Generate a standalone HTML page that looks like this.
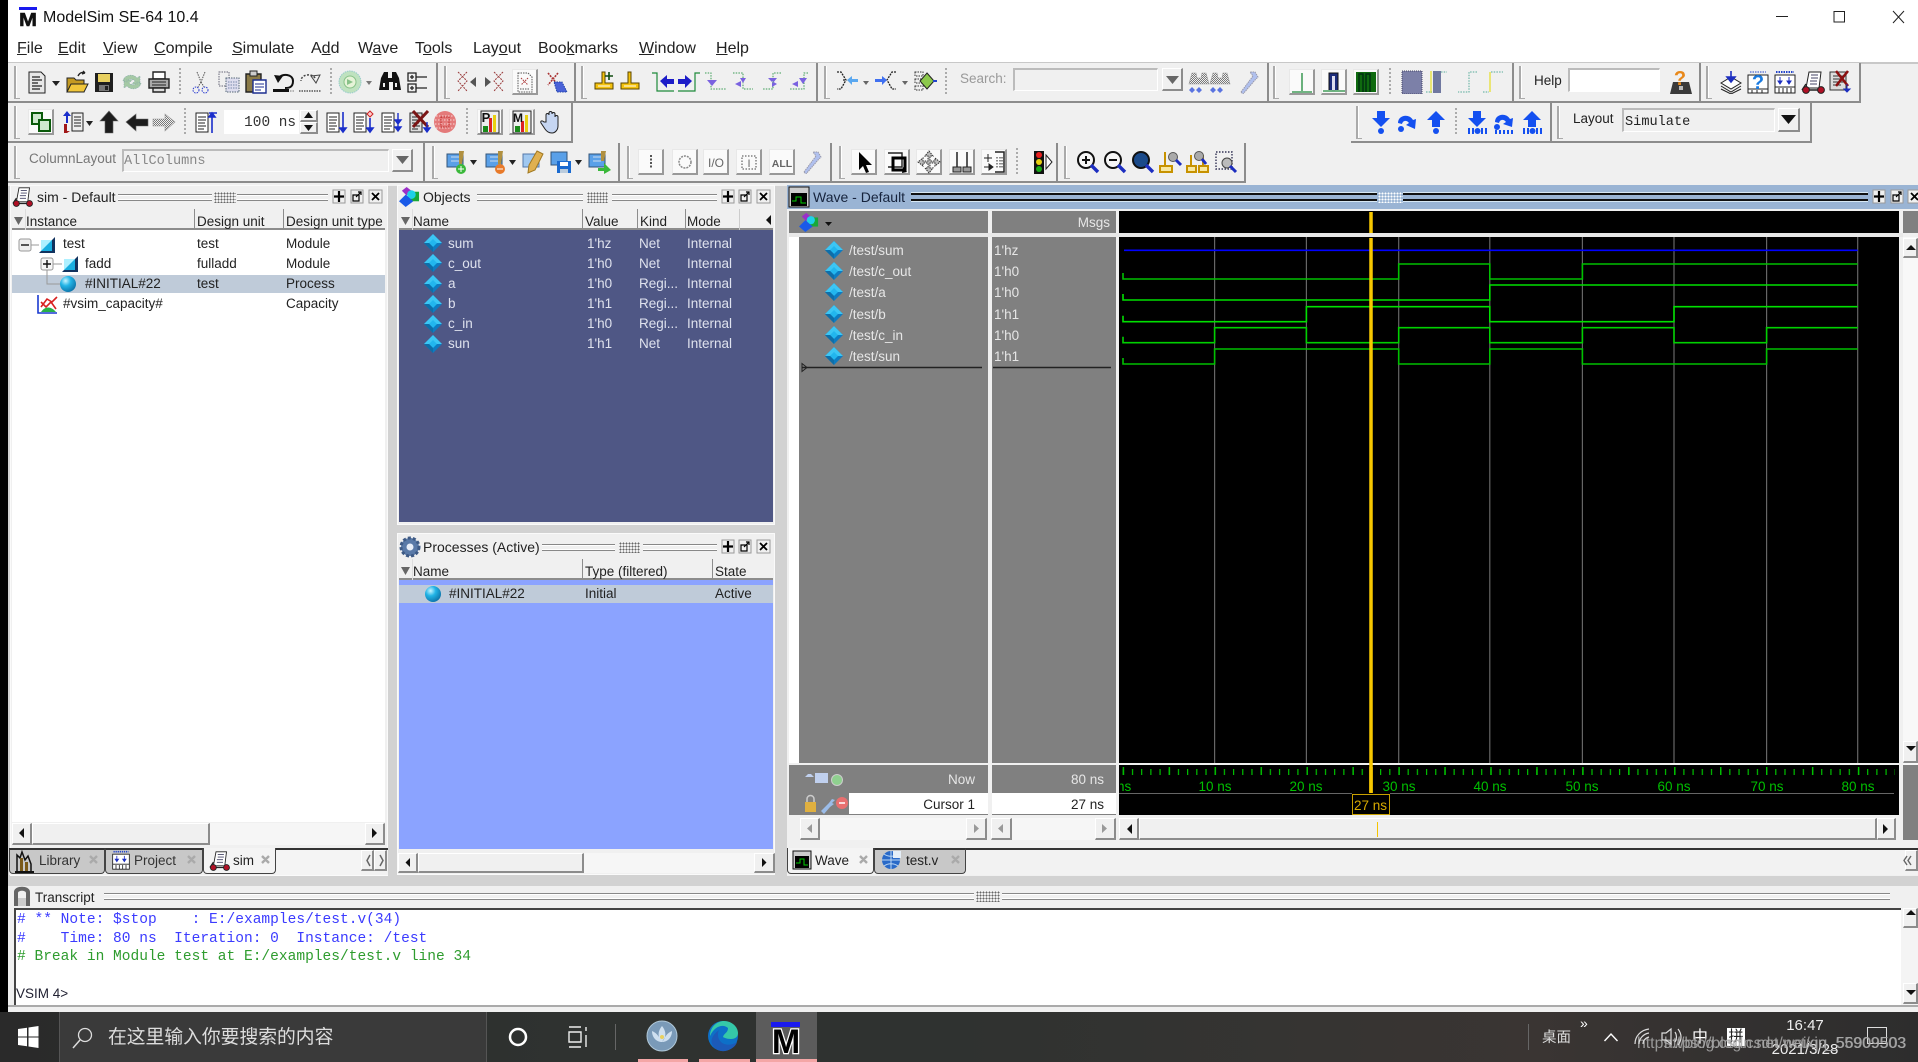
<!DOCTYPE html>
<html><head><meta charset="utf-8"><title>ModelSim SE-64 10.4</title>
<style>
html,body{margin:0;padding:0;width:1918px;height:1062px;overflow:hidden;background:#d2d2d2}
body{position:relative;font-family:"Liberation Sans","Noto Sans CJK SC",sans-serif;color:#222;font-size:13.5px;filter:blur(.35px)}
div{position:absolute;box-sizing:border-box;white-space:nowrap}
.t{line-height:18px;height:18px;margin-top:1px}
.mn{font-size:16px}
.m{font-family:"Liberation Mono",monospace}
u{text-decoration-thickness:1px}
.tb{background:#f0f0f0;border-right:2px solid #8c8c8c;border-bottom:2px solid #8c8c8c}
.g{width:2px;background:#aaa;border-right:1px solid #fff;box-sizing:content-box}
.g::after{content:"";position:absolute;left:0;bottom:0;width:6px;height:1px;background:#aaa}
.p{width:26px;height:26px;background:#fafafa;border:1px solid #e8e8e8;border-right:2px solid #999;border-bottom:2px solid #999}
.in{border:1px solid #bbb;border-right-color:#fff;border-bottom-color:#fff;border-top-width:2px;border-left-width:2px}
.b{background:#f0f0f0;border:1px solid #fff;border-right:2px solid #8c8c8c;border-bottom:2px solid #8c8c8c}
.pn{background:#f0f0f0;border:1px solid #fafafa}
.dl{height:7px;border-top:1px solid #888;border-bottom:1px solid #888;box-shadow:inset 0 1px 0 #fff,inset 0 -1px 0 #fff}
.dw{height:8px;border-top:2px solid #111;border-bottom:2px solid #111;box-shadow:0 -1px 0 #d8e8f4,0 1px 0 #d8e8f4}
.gr{height:11px;background-image:radial-gradient(#666 .8px,transparent 1px);background-size:3px 3px}
.hd{background:#f0f0f0;height:21px;border-bottom:2px solid #8c8c8c}
.cb{width:1px;background:#8c8c8c;height:21px}
.w{color:#e6e6e6}
.o{color:#dfe2ee}
.l{color:#00c000;width:60px;text-align:center;top:777px}
.tx{font-family:"Liberation Mono",monospace;font-size:14.55px;line-height:18px;height:18px;white-space:pre;left:17px}
</style></head><body>

<!-- window base -->
<div style="left:0;top:0;width:8px;height:1012px;background:#000"></div>
<div style="left:8px;top:0;width:1910px;height:62px;background:#fff"></div>
<div style="left:8px;top:62px;width:1910px;height:124px;background:#f0f0f0;border-top:2px solid #c8c8c8"></div>

<!-- title -->
<div class="t" style="left:43px;top:8px;font-size:16px;color:#111">ModelSim SE-64 10.4</div>
<div style="left:19px;top:7px;width:18px;height:3px;background:#1a1aee"></div>
<div style="left:17px;top:9px;width:22px;height:19px;text-align:center;font-weight:bold;font-size:18px;line-height:22px;color:#111;overflow:hidden;transform:scaleX(1.2);-webkit-text-stroke:.5px #111">M</div>

<!-- menu -->
<div class="t mn" style="left:17px;top:39px"><u>F</u>ile</div>
<div class="t mn" style="left:58px;top:39px"><u>E</u>dit</div>
<div class="t mn" style="left:103px;top:39px"><u>V</u>iew</div>
<div class="t mn" style="left:154px;top:39px"><u>C</u>ompile</div>
<div class="t mn" style="left:232px;top:39px"><u>S</u>imulate</div>
<div class="t mn" style="left:311px;top:39px">A<u>d</u>d</div>
<div class="t mn" style="left:358px;top:39px">W<u>a</u>ve</div>
<div class="t mn" style="left:415px;top:39px">T<u>o</u>ols</div>
<div class="t mn" style="left:473px;top:39px">Lay<u>o</u>ut</div>
<div class="t mn" style="left:538px;top:39px">Boo<u>k</u>marks</div>
<div class="t mn" style="left:639px;top:39px"><u>W</u>indow</div>
<div class="t mn" style="left:716px;top:39px"><u>H</u>elp</div>

<!-- toolbars row 1 -->
<div class="tb" style="left:8px;top:63px;width:430px;height:40px"></div>
<div class="tb" style="left:438px;top:63px;width:138px;height:40px"></div>
<div class="tb" style="left:576px;top:63px;width:242px;height:40px"></div>
<div class="tb" style="left:818px;top:63px;width:451px;height:40px"></div>
<div class="tb" style="left:1269px;top:63px;width:245px;height:40px"></div>
<div class="tb" style="left:1514px;top:63px;width:187px;height:40px"></div>
<div class="tb" style="left:1701px;top:63px;width:160px;height:40px"></div>
<!-- row 2 -->
<div class="tb" style="left:8px;top:103px;width:565px;height:40px"></div>
<div class="tb" style="left:1351px;top:103px;width:201px;height:40px"></div>
<div class="tb" style="left:1552px;top:103px;width:260px;height:40px"></div>
<!-- row 3 -->
<div class="tb" style="left:8px;top:143px;width:417px;height:40px"></div>
<div class="tb" style="left:425px;top:143px;width:195px;height:40px"></div>
<div class="tb" style="left:620px;top:143px;width:212px;height:40px"></div>
<div class="tb" style="left:832px;top:143px;width:226px;height:40px"></div>
<div class="tb" style="left:1058px;top:143px;width:188px;height:40px"></div>

<!-- grips -->
<div class="g" style="left:14px;top:66px;height:33px"></div>
<div class="g" style="left:444px;top:66px;height:33px"></div>
<div class="g" style="left:581px;top:66px;height:33px"></div>
<div class="g" style="left:824px;top:66px;height:33px"></div>
<div class="g" style="left:1273px;top:66px;height:33px"></div>
<div class="g" style="left:1519px;top:66px;height:33px"></div>
<div class="g" style="left:1706px;top:66px;height:33px"></div>
<div class="g" style="left:14px;top:106px;height:33px"></div>
<div class="g" style="left:1356px;top:106px;height:33px"></div>
<div class="g" style="left:1557px;top:106px;height:33px"></div>
<div class="g" style="left:14px;top:146px;height:33px"></div>
<div class="g" style="left:432px;top:146px;height:33px"></div>
<div class="g" style="left:627px;top:146px;height:33px"></div>
<div class="g" style="left:839px;top:146px;height:33px"></div>
<div class="g" style="left:1064px;top:146px;height:33px"></div>

<!-- pressed buttons -->
<div class="p" style="left:512px;top:69px"></div>
<div class="p" style="left:1289px;top:69px"></div>
<div class="p" style="left:1321px;top:69px"></div>
<div class="p" style="left:1353px;top:69px"></div>
<div class="p" style="left:28px;top:109px"></div>
<div class="p" style="left:477px;top:109px"></div>
<div class="p" style="left:509px;top:109px"></div>
<div class="p" style="left:638px;top:149px"></div>
<div class="p" style="left:672px;top:149px"></div>
<div class="p" style="left:703px;top:149px"></div>
<div class="p" style="left:736px;top:149px"></div>
<div class="p" style="left:769px;top:149px"></div>
<div class="p" style="left:851px;top:149px"></div>
<div class="p" style="left:884px;top:149px"></div>
<div class="p" style="left:916px;top:149px"></div>
<div class="p" style="left:949px;top:149px"></div>
<div class="p" style="left:981px;top:149px"></div>

<!-- toolbar fields -->
<div class="t" style="left:960px;top:69px;color:#999">Search:</div>
<div class="in" style="left:1013px;top:68px;width:145px;height:23px;background:#f0f0f0"></div>
<div class="b" style="left:1162px;top:68px;width:21px;height:23px"></div>
<div class="t" style="left:1534px;top:71px">Help</div>
<div class="in" style="left:1568px;top:68px;width:92px;height:24px;background:#fff"></div>
<div class="in" style="left:224px;top:110px;width:75px;height:24px;background:#fff;border-color:#fff"></div>
<div class="t m" style="left:224px;top:113px;width:72px;text-align:right;font-size:14.4px;color:#333">100 ns</div>
<div class="b" style="left:300px;top:110px;width:18px;height:12px;padding:0"></div>
<div class="b" style="left:300px;top:122px;width:18px;height:12px;padding:0"></div>
<div class="t" style="left:1573px;top:109px">Layout</div>
<div class="in" style="left:1622px;top:108px;width:153px;height:24px;background:#f0f0f0"></div>
<div class="t m" style="left:1625px;top:113px;font-size:13.6px">Simulate</div>
<div class="b" style="left:1778px;top:108px;width:22px;height:24px"></div>
<div class="t" style="left:29px;top:149px;color:#777">ColumnLayout</div>
<div class="in" style="left:122px;top:149px;width:267px;height:23px;background:#f0f0f0"></div>
<div class="t m" style="left:124px;top:152px;font-size:13.6px;color:#888">AllColumns</div>
<div class="b" style="left:392px;top:149px;width:21px;height:23px"></div>

<!-- SIM PANEL -->
<div class="pn" style="left:10px;top:185px;width:378px;height:691px"></div>
<div class="t" style="left:37px;top:187px;font-size:14px">sim - Default</div>
<div class="dl" style="left:118px;top:194px;width:94px"></div>
<div class="gr" style="left:214px;top:192px;width:22px"></div>
<div class="dl" style="left:237px;top:194px;width:91px"></div>
<div class="hd" style="left:12px;top:209px;width:373px"></div>
<div class="cb" style="left:25px;top:209px;background:#ddd"></div>
<div class="cb" style="left:194px;top:209px"></div>
<div class="cb" style="left:283px;top:209px"></div>
<div class="t" style="left:26px;top:212px">Instance</div>
<div class="t" style="left:197px;top:212px">Design unit</div>
<div class="t" style="left:286px;top:212px">Design unit type</div>
<div style="left:12px;top:230px;width:373px;height:592px;background:#fff"></div>
<div style="left:12px;top:275px;width:373px;height:18px;background:#bfcbd9"></div>
<div class="t" style="left:63px;top:234px">test</div>
<div class="t" style="left:197px;top:234px">test</div>
<div class="t" style="left:286px;top:234px">Module</div>
<div class="t" style="left:85px;top:254px">fadd</div>
<div class="t" style="left:197px;top:254px">fulladd</div>
<div class="t" style="left:286px;top:254px">Module</div>
<div class="t" style="left:85px;top:274px">#INITIAL#22</div>
<div class="t" style="left:197px;top:274px">test</div>
<div class="t" style="left:286px;top:274px">Process</div>
<div class="t" style="left:63px;top:294px">#vsim_capacity#</div>
<div class="t" style="left:286px;top:294px">Capacity</div>
<div style="left:12px;top:823px;width:373px;height:22px;background:#f6f6f6"></div>
<div class="b" style="left:12px;top:823px;width:20px;height:22px"></div>
<div class="b" style="left:32px;top:823px;width:178px;height:22px"></div>
<div class="b" style="left:365px;top:823px;width:20px;height:22px"></div>
<!-- sim tabs -->
<div style="left:9px;top:848px;width:379px;height:27px;background:#f2f2f2;border-top:2px solid #333"></div>
<div style="left:9px;top:848px;width:96px;height:26px;background:#c8c8c8;border:1px solid #444;border-top:2px solid #333;border-radius:0 0 4px 4px"></div>
<div style="left:105px;top:848px;width:98px;height:26px;background:#c8c8c8;border:1px solid #444;border-top:2px solid #333;border-radius:0 0 4px 4px"></div>
<div style="left:203px;top:848px;width:73px;height:26px;background:#f4f4f4;border:1px solid #444;border-top:0;border-radius:0 0 4px 4px"></div>
<div style="left:276px;top:848px;width:85px;height:27px;background:#f4f4f4;border-top:2px solid #333"></div>
<div class="t" style="left:39px;top:851px;color:#333">Library</div>
<div class="t" style="left:134px;top:851px;color:#333">Project</div>
<div class="t" style="left:233px;top:851px;color:#222">sim</div>
<div class="b" style="left:361px;top:850px;width:13px;height:21px"></div>
<div class="b" style="left:374px;top:850px;width:13px;height:21px"></div>

<!-- OBJECTS PANEL -->
<div class="pn" style="left:397px;top:185px;width:378px;height:340px"></div>
<div class="t" style="left:423px;top:187px;font-size:14px">Objects</div>
<div class="dl" style="left:477px;top:194px;width:106px"></div>
<div class="gr" style="left:587px;top:192px;width:21px"></div>
<div class="dl" style="left:612px;top:194px;width:105px"></div>
<div class="hd" style="left:399px;top:209px;width:374px"></div>
<div class="cb" style="left:412px;top:209px;background:#ddd"></div>
<div class="cb" style="left:582px;top:209px"></div>
<div class="cb" style="left:637px;top:209px"></div>
<div class="cb" style="left:685px;top:209px"></div>
<div class="cb" style="left:739px;top:209px;background:#ccc"></div>
<div class="t" style="left:413px;top:212px">Name</div>
<div class="t" style="left:585px;top:212px">Value</div>
<div class="t" style="left:640px;top:212px">Kind</div>
<div class="t" style="left:687px;top:212px">Mode</div>
<div style="left:399px;top:230px;width:374px;height:292px;background:#4f5785"></div>
<div class="t o" style="left:448px;top:234px">sum</div><div class="t o" style="left:587px;top:234px">1'hz</div><div class="t o" style="left:639px;top:234px">Net</div><div class="t o" style="left:687px;top:234px">Internal</div>
<div class="t o" style="left:448px;top:254px">c_out</div><div class="t o" style="left:587px;top:254px">1'h0</div><div class="t o" style="left:639px;top:254px">Net</div><div class="t o" style="left:687px;top:254px">Internal</div>
<div class="t o" style="left:448px;top:274px">a</div><div class="t o" style="left:587px;top:274px">1'h0</div><div class="t o" style="left:639px;top:274px">Regi...</div><div class="t o" style="left:687px;top:274px">Internal</div>
<div class="t o" style="left:448px;top:294px">b</div><div class="t o" style="left:587px;top:294px">1'h1</div><div class="t o" style="left:639px;top:294px">Regi...</div><div class="t o" style="left:687px;top:294px">Internal</div>
<div class="t o" style="left:448px;top:314px">c_in</div><div class="t o" style="left:587px;top:314px">1'h0</div><div class="t o" style="left:639px;top:314px">Regi...</div><div class="t o" style="left:687px;top:314px">Internal</div>
<div class="t o" style="left:448px;top:334px">sun</div><div class="t o" style="left:587px;top:334px">1'h1</div><div class="t o" style="left:639px;top:334px">Net</div><div class="t o" style="left:687px;top:334px">Internal</div>

<!-- PROCESSES PANEL -->
<div class="pn" style="left:397px;top:533px;width:378px;height:342px"></div>
<div class="t" style="left:423px;top:537px;font-size:14px">Processes (Active)</div>
<div class="dl" style="left:542px;top:544px;width:73px"></div>
<div class="gr" style="left:619px;top:542px;width:21px"></div>
<div class="dl" style="left:643px;top:544px;width:74px"></div>
<div class="hd" style="left:399px;top:559px;width:374px"></div>
<div class="cb" style="left:412px;top:559px;background:#ddd"></div>
<div class="cb" style="left:582px;top:559px"></div>
<div class="cb" style="left:712px;top:559px"></div>
<div class="t" style="left:413px;top:562px">Name</div>
<div class="t" style="left:585px;top:562px">Type (filtered)</div>
<div class="t" style="left:715px;top:562px">State</div>
<div style="left:399px;top:580px;width:374px;height:269px;background:#8ba3ff"></div>
<div style="left:399px;top:585px;width:374px;height:18px;background:#bfcbd9"></div>
<div class="t" style="left:449px;top:584px">#INITIAL#22</div>
<div class="t" style="left:585px;top:584px">Initial</div>
<div class="t" style="left:715px;top:584px">Active</div>
<div style="left:398px;top:853px;width:377px;height:20px;background:#f6f6f6"></div>
<div class="b" style="left:398px;top:853px;width:20px;height:20px"></div>
<div class="b" style="left:418px;top:853px;width:166px;height:20px"></div>
<div class="b" style="left:754px;top:853px;width:21px;height:20px"></div>

<!-- WAVE PANEL -->
<div style="left:787px;top:185px;width:1131px;height:691px;background:#f0f0f0"></div>
<div style="left:787px;top:185px;width:1131px;height:24px;background:#9ab4d4"></div>
<div class="t" style="left:813px;top:187px;font-size:14px;color:#16233c">Wave - Default</div>
<div class="dw" style="left:911px;top:193px;width:466px"></div>
<div class="gr" style="left:1378px;top:192px;width:25px;background-image:radial-gradient(#fff .9px,transparent 1.1px)"></div>
<div class="dw" style="left:1403px;top:193px;width:465px"></div>
<!-- wave columns -->
<div style="left:789px;top:211px;width:199px;height:22px;background:#808080"></div>
<div style="left:992px;top:211px;width:124px;height:22px;background:#808080"></div>
<div style="left:1119px;top:211px;width:780px;height:22px;background:#000"></div>
<div style="left:789px;top:233px;width:1114px;height:4px;background:#e8e8e8"></div>
<div style="left:789px;top:237px;width:199px;height:526px;background:#808080"></div>
<div style="left:789px;top:237px;width:10px;height:526px;background:#fff"></div>
<div style="left:992px;top:237px;width:124px;height:526px;background:#808080"></div>
<div style="left:1119px;top:237px;width:780px;height:526px;background:#000"></div>
<div class="t w" style="left:1070px;top:213px;width:40px;text-align:right">Msgs</div>
<div class="t w" style="left:849px;top:241px">/test/sum</div><div class="t w" style="left:994px;top:241px">1'hz</div>
<div class="t w" style="left:849px;top:262px">/test/c_out</div><div class="t w" style="left:994px;top:262px">1'h0</div>
<div class="t w" style="left:849px;top:283px">/test/a</div><div class="t w" style="left:994px;top:283px">1'h0</div>
<div class="t w" style="left:849px;top:305px">/test/b</div><div class="t w" style="left:994px;top:305px">1'h1</div>
<div class="t w" style="left:849px;top:326px">/test/c_in</div><div class="t w" style="left:994px;top:326px">1'h0</div>
<div class="t w" style="left:849px;top:347px">/test/sun</div><div class="t w" style="left:994px;top:347px">1'h1</div>
<!-- bottom of wave -->
<div style="left:789px;top:765px;width:199px;height:50px;background:#808080"></div>
<div style="left:992px;top:765px;width:124px;height:50px;background:#808080"></div>
<div style="left:1119px;top:765px;width:780px;height:50px;background:#000"></div>
<div style="left:849px;top:793px;width:139px;height:21px;background:#fff"></div>
<div style="left:992px;top:793px;width:124px;height:21px;background:#fff"></div>
<div class="t w" style="left:900px;top:770px;width:75px;text-align:right">Now</div>
<div class="t" style="left:900px;top:795px;width:75px;text-align:right">Cursor 1</div>
<div class="t w" style="left:1040px;top:770px;width:64px;text-align:right">80 ns</div>
<div class="t" style="left:1040px;top:795px;width:64px;text-align:right">27 ns</div>
<div class="t" style="left:1120px;top:777px;width:16px;overflow:hidden;color:#00c000"><span style="margin-left:-3px">ns</span></div>
<div class="t l" style="left:1185px">10 ns</div>
<div class="t l" style="left:1276px">20 ns</div>
<div class="t l" style="left:1369px">30 ns</div>
<div class="t l" style="left:1460px">40 ns</div>
<div class="t l" style="left:1552px">50 ns</div>
<div class="t l" style="left:1644px">60 ns</div>
<div class="t l" style="left:1737px">70 ns</div>
<div class="t l" style="left:1828px">80 ns</div>
<div style="left:1352px;top:794px;width:38px;height:21px;border:1px solid #c8a000"></div>
<div class="t" style="left:1354px;top:796px;color:#d8aa00">27 ns</div>
<!-- wave scrolls -->
<div style="left:800px;top:818px;width:187px;height:22px;background:#f6f6f6"></div>
<div class="b" style="left:800px;top:818px;width:20px;height:22px"></div>
<div class="b" style="left:966px;top:818px;width:21px;height:22px"></div>
<div style="left:991px;top:818px;width:125px;height:22px;background:#f6f6f6"></div>
<div class="b" style="left:991px;top:818px;width:21px;height:22px"></div>
<div class="b" style="left:1095px;top:818px;width:21px;height:22px"></div>
<div class="b" style="left:1119px;top:818px;width:20px;height:22px"></div>
<div class="b" style="left:1139px;top:818px;width:738px;height:22px"></div>
<div class="b" style="left:1877px;top:818px;width:19px;height:22px"></div>
<!-- wave right scrollbar -->
<div style="left:1903px;top:211px;width:15px;height:22px;background:#808080"></div>
<div style="left:1903px;top:237px;width:15px;height:528px;background:#f8f8f8"></div>
<div class="b" style="left:1903px;top:238px;width:15px;height:20px"></div>
<div class="b" style="left:1903px;top:741px;width:15px;height:22px"></div>
<div style="left:1903px;top:765px;width:15px;height:75px;background:#808080"></div>
<!-- wave tabs -->
<div style="left:787px;top:848px;width:1131px;height:27px;background:#f2f2f2;border-top:2px solid #333"></div>
<div style="left:787px;top:848px;width:87px;height:26px;background:#f4f4f4;border:1px solid #444;border-top:0;border-radius:0 0 4px 4px"></div>
<div style="left:874px;top:848px;width:92px;height:26px;background:#c8c8c8;border:1px solid #444;border-top:2px solid #333;border-radius:0 0 4px 4px"></div>
<div class="t" style="left:815px;top:851px">Wave</div>
<div class="t" style="left:906px;top:851px">test.v</div>
<div class="b" style="left:1905px;top:850px;width:13px;height:21px"></div>

<!-- TRANSCRIPT -->
<div style="left:8px;top:886px;width:1910px;height:126px;background:#f0f0f0"></div>
<div class="t" style="left:35px;top:888px">Transcript</div>
<div class="dl" style="left:104px;top:893px;width:870px"></div>
<div class="gr" style="left:976px;top:891px;width:24px"></div>
<div class="dl" style="left:1002px;top:893px;width:888px"></div>
<div style="left:14px;top:908px;width:1887px;height:97px;background:#fff;border-top:2px solid #444;border-left:2px solid #444"></div>
<div class="tx" style="top:911px;color:#3b3bff"># ** Note: $stop    : E:/examples/test.v(34)</div>
<div class="tx" style="top:930px;color:#3b3bff">#    Time: 80 ns  Iteration: 0  Instance: /test</div>
<div class="tx" style="top:948px;color:#2e9c2e"># Break in Module test at E:/examples/test.v line 34</div>
<div class="t" style="left:16px;top:984px;color:#223;font-size:13.5px">VSIM 4&gt;</div>
<div style="left:1901px;top:908px;width:17px;height:97px;background:#f4f4f4"></div>
<div class="b" style="left:1903px;top:908px;width:15px;height:20px"></div>
<div class="b" style="left:1903px;top:983px;width:15px;height:21px"></div>
<div style="left:8px;top:1005px;width:1910px;height:2px;background:#aaa"></div>

<!-- TASKBAR -->
<div style="left:0;top:1012px;width:1918px;height:50px;background:linear-gradient(90deg,#2a2a2a 0,#2f3230 30%,#2f3230 50%,#3a3533 80%,#2d2d2d 100%)"></div>
<div style="left:59px;top:1012px;width:428px;height:50px;background:#3a3a3a;border:1px solid #555;border-top:0;border-bottom:0"></div>
<div style="left:615px;top:1024px;width:1px;height:26px;background:#666"></div>
<div style="left:756px;top:1012px;width:61px;height:50px;background:#5c5c5c"></div>
<div style="left:638px;top:1059px;width:50px;height:3px;background:#f4a6a6"></div>
<div style="left:699px;top:1059px;width:51px;height:3px;background:#f4a6a6"></div>
<div style="left:756px;top:1059px;width:61px;height:3px;background:#f4a6a6"></div>
<div style="left:108px;top:1024px;height:26px;line-height:26px;font-size:18.8px;color:#ddd;font-family:'Liberation Sans','Noto Sans CJK SC',sans-serif">在这里输入你要搜索的内容</div>
<div style="left:771px;top:1022px;width:29px;height:5px;background:#1a1aee"></div>
<div style="left:767px;top:1020px;width:38px;height:39px;text-align:center;font-weight:bold;font-size:34px;line-height:45px;color:#000;-webkit-text-stroke:2.5px #fff;paint-order:stroke fill;overflow:hidden">M</div>

<div style="left:1528px;top:1024px;width:1px;height:26px;background:#666"></div>
<div class="t" style="left:1542px;top:1028px;font-size:14.5px;color:#ddd">桌面</div>
<div class="t" style="left:1580px;top:1013px;font-size:14px;color:#fff">»</div>
<div class="t" style="left:1692px;top:1028px;font-size:16px;color:#fff">中</div>
<div style="left:1727px;top:1028px;width:18px;height:18px;background:#fff;color:#222;font-size:15px;line-height:18px;text-align:center">拼</div>
<div class="t" style="left:1765px;top:1016px;width:80px;text-align:center;font-size:15px;color:#eee">16:47</div>
<div class="t" style="left:1765px;top:1040px;width:80px;text-align:center;font-size:15px;color:#eee">2021/3/28</div>
<div style="left:1867px;top:1027px;width:20px;height:17px;border:1px solid #ddd"></div>
<div class="t" style="left:1637px;top:1034px;font-size:15.8px;color:#aaa;opacity:.85">https://blog.csdn.net/weixin_55909503</div>
<div class="t" style="left:1664px;top:1034px;font-size:15.8px;color:#aaa;opacity:.85">https://blog.csdn.net/qq_56909503</div>

<!-- ICON & WAVE OVERLAY -->
<svg style="position:absolute;left:0;top:0;z-index:5;pointer-events:none" width="1918" height="1062" viewBox="0 0 1918 1062">
<defs>
<radialGradient id="ball" cx=".35" cy=".3" r=".8"><stop offset="0" stop-color="#c8f4ff"/><stop offset=".4" stop-color="#22b4e6"/><stop offset="1" stop-color="#0a6aa0"/></radialGradient>
<pattern id="tk1" x="1122.7" y="769" width="9.19" height="6" patternUnits="userSpaceOnUse"><rect width="1.2" height="6" fill="#00c000"/></pattern>
<pattern id="tk5" x="1122.7" y="767" width="45.95" height="8" patternUnits="userSpaceOnUse"><rect width="1.4" height="8" fill="#00c000"/></pattern>
<pattern id="dith" width="2" height="2" patternUnits="userSpaceOnUse"><rect width="1" height="1" fill="#777"/><rect x="1" y="1" width="1" height="1" fill="#777"/></pattern>

<symbol id="doc" viewBox="0 0 24 24"><path d="M4 2h12l4 4v17H4z" fill="#e8e8e8" stroke="#222"/><path d="M7 7h8M7 10h10M7 13h6M7 16h10M7 19h8" stroke="#222" stroke-width="1.2"/></symbol>
<symbol id="folder" viewBox="0 0 24 24"><path d="M2 8h7l2 2h8v12H2z" fill="#c49a22" stroke="#222"/><path d="M2 22l4-8h17l-4 8z" fill="#f0c63a" stroke="#222"/><path d="M13 6c2-4 5-4 7-3m0 0l-2-2m2 2l-3 1" fill="none" stroke="#222" stroke-width="1.4"/></symbol>
<symbol id="save" viewBox="0 0 24 24"><path d="M3 3h18v19H3z" fill="#1f1f1f"/><path d="M6 4h12v8H6z" fill="#e8d060"/><path d="M7 15h10v6H7z" fill="#777"/><path d="M13 16h3v4h-3z" fill="#222"/></symbol>
<symbol id="reload" viewBox="0 0 24 24"><path d="M3 11c1-6 10-8 14-3l3-2v8h-8l3-3c-3-3-7-2-8 1zM21 13c-1 6-10 8-14 3l-3 2v-8h8l-3 3c3 3 7 2 8-1z" fill="#a5c9a5" stroke="#8aa" stroke-width=".6" stroke-dasharray="1.4 1"/></symbol>
<symbol id="print" viewBox="0 0 24 24"><path d="M6 2h12v7H6z" fill="#fff" stroke="#222" stroke-width="1.4"/><path d="M2 9h20v9H2z" fill="#aaa" stroke="#222" stroke-width="1.4"/><path d="M5 12h14M5 15h14" stroke="#222"/><path d="M6 18h12v4H6z" fill="#ddd" stroke="#222" stroke-width="1.4"/></symbol>
<symbol id="cut" viewBox="0 0 24 24"><path d="M9 2l4 10 4-10M13 12l-3 5M13 12l3 5" fill="none" stroke="#555" stroke-dasharray="1.5 1"/><circle cx="8" cy="20" r="3" fill="none" stroke="#2a3bd0" stroke-dasharray="1.5 1"/><circle cx="17" cy="20" r="3" fill="none" stroke="#2a3bd0" stroke-dasharray="1.5 1"/></symbol>
<symbol id="copy" viewBox="0 0 24 24"><path d="M2 2h10v14H2z" fill="none" stroke="#667" stroke-dasharray="1.5 1"/><path d="M9 8h13v14H9z" fill="#dde" stroke="#567"  stroke-dasharray="1.5 1"/><path d="M11 12h9M11 15h9M11 18h9" stroke="#78a" stroke-dasharray="1.5 1"/></symbol>
<symbol id="paste" viewBox="0 0 24 24"><path d="M2 4h15v18H2z" fill="#8a7a48" stroke="#222" stroke-width="1.4"/><path d="M6 1h7v5H6z" fill="#ccc" stroke="#222"/><path d="M9 10h13v13H9z" fill="#fff" stroke="#1c2e90" stroke-width="1.4"/><path d="M11 14h9M11 17h9M11 20h6" stroke="#1c2e90"/></symbol>
<symbol id="undo" viewBox="0 0 24 24"><path d="M7 8c3-5 14-4 14 3s-5 7-8 7" fill="none" stroke="#111" stroke-width="2"/><path d="M2 5l9 1-5 7z" fill="#111"/><path d="M1 19h16v3H1z" fill="#111"/><path d="M18 21h5" stroke="#777" stroke-dasharray="1.5 1"/></symbol>
<symbol id="redo" viewBox="0 0 24 24"><path d="M17 8C14 3 3 4 3 11" fill="none" stroke="#444" stroke-width="1.5" stroke-dasharray="2 1.5"/><path d="M22 5l-9 1 5 7z" fill="none" stroke="#444"/><path d="M1 21h22" stroke="#555" stroke-dasharray="1.5 1" stroke-width="1.4"/></symbol>
<symbol id="green" viewBox="0 0 24 24"><circle cx="12" cy="12" r="11" fill="#bfe2bf" stroke="#9cc" stroke-dasharray="1.5 .8"/><circle cx="12" cy="12" r="6" fill="#e6f3d8" stroke="#88c288"/><path d="M9 9l6 3-6 3z" fill="#88c288"/></symbol>
<symbol id="bino" viewBox="0 0 24 24"><path d="M3 8l3-6h4v6h4V2h4l3 6 2 12h-8V12h-4v8H1z" fill="#111"/><path d="M5 13h2v4H5zM17 13h2v4h-2z" fill="#eee"/></symbol>
<symbol id="tree" viewBox="0 0 24 24"><path d="M3 3h8v8H3zM3 14h8v8H3z" fill="#eee" stroke="#222" stroke-width="1.3"/><path d="M11 7h11M11 18h11M5 7h4M7 5v4M5 18h4M7 16v4" stroke="#222" stroke-width="1.3"/></symbol>
<symbol id="xl" viewBox="0 0 24 24"><path d="M3 2l9 9-9 10M12 2l-9 9 9 10" fill="none" stroke="#9a3c3c" stroke-dasharray="2 1"/><path d="M21 7l-6 5 6 5z" fill="#555"/></symbol>
<symbol id="xr" viewBox="0 0 24 24"><path d="M12 2l9 9-9 10M21 2l-9 9 9 10" fill="none" stroke="#9a3c3c" stroke-dasharray="2 1"/><path d="M3 7l6 5-6 5z" fill="#555"/></symbol>
<symbol id="xdoc" viewBox="0 0 24 24"><path d="M5 3h10l4 4v15H5z" fill="none" stroke="#555" stroke-dasharray="1.5 1"/><path d="M8 8l7 7M15 8l-7 7" stroke="#a33" stroke-dasharray="1.5 1"/><path d="M7 19h10" stroke="#555" stroke-dasharray="1.5 1"/></symbol>
<symbol id="xblue" viewBox="0 0 24 24"><path d="M3 3l10 12M13 3L3 15" stroke="#a33" stroke-width="1.6" stroke-dasharray="2 1"/><path d="M9 12h8l5 10H12z" fill="#4a62d8" stroke="#24a" stroke-dasharray="1.5 1"/></symbol>
<symbol id="yp" viewBox="0 0 24 24"><path d="M9 2v11H2v6h18v-6h-8V2z" fill="#f4c20d" stroke="#5a4500"/><path d="M5 16h12" stroke="#fff"/><path d="M16 2v8M12 6h8" stroke="#0f4a0f" stroke-width="1.6"/></symbol>
<symbol id="yl" viewBox="0 0 24 24"><path d="M9 2v11H2v6h18v-6h-8V2z" fill="#f4c20d" stroke="#5a4500"/><path d="M5 16h12" stroke="#fff"/></symbol>
<symbol id="gl" viewBox="0 0 24 24"><path d="M0 3h5v18h17" fill="none" stroke="#1d8a3a" stroke-width="1.2"/><path d="M8 11l7-6v4h7v5h-7v4z" fill="#1c1cc8"/></symbol>
<symbol id="gr" viewBox="0 0 24 24"><path d="M24 3h-5v18H2" fill="none" stroke="#1d8a3a" stroke-width="1.2"/><path d="M16 11L9 5v4H2v5h7v4z" fill="#1c1cc8"/></symbol>
<symbol id="d1" viewBox="0 0 24 24"><path d="M1 3h6v16h15" fill="none" stroke="#3a9c55" stroke-dasharray="1.5 1.2"/><path d="M3 10h10l-5 6z" fill="#7a62e0"/></symbol>
<symbol id="d2" viewBox="0 0 24 24"><path d="M2 3h10v16h10" fill="none" stroke="#3a9c55" stroke-dasharray="1.5 1.2"/><path d="M4 14l6-3v6zM9 8h6l-3 5z" fill="#7a62e0"/></symbol>
<symbol id="d3" viewBox="0 0 24 24"><path d="M22 3H14v16H3" fill="none" stroke="#3a9c55" stroke-dasharray="1.5 1.2"/><path d="M9 8h9l-4 5zM18 14l-5-3v6z" fill="#7a62e0"/></symbol>
<symbol id="d4" viewBox="0 0 24 24"><path d="M22 3h-4v16H3" fill="none" stroke="#3a9c55" stroke-dasharray="1.5 1.2"/><path d="M6 14l6-3v6zM13 8h8l-4 6z" fill="#7a62e0"/></symbol>
<symbol id="mg1" viewBox="0 0 24 24"><path d="M2 2h4l5 8-5 9H2M8 10h3" fill="none" stroke="#222" stroke-dasharray="2 1" stroke-width="1.3"/><path d="M12 10l5-4v3h6v3h-6v3z" fill="#5aa8f0"/></symbol>
<symbol id="mg2" viewBox="0 0 24 24"><path d="M22 2h-4l-5 8 5 9h4" fill="none" stroke="#222" stroke-dasharray="2 1" stroke-width="1.3"/><path d="M13 10l-5-4v3H1v3h7v3z" fill="#4070f0"/></symbol>
<symbol id="mg3" viewBox="0 0 24 24"><path d="M2 2h8v4H2zM2 9h8v4H2zM2 16h8v4H2z" fill="none" stroke="#333" stroke-dasharray="1.5 1"/><path d="M14 3l7 8-7 8-7-8z" fill="#8cc84c" stroke="#222"/><path d="M20 11h4" stroke="#24c" stroke-width="2"/></symbol>
<symbol id="bgray" viewBox="0 0 24 24"><path d="M2 14L5 3h4l1 5h4l1-5h4l3 11z" fill="url(#dith)" stroke="#999" stroke-width=".6"/><path d="M2 20l3-3 3 3-3 3zM9 20l3-3 3 3-3 3z" fill="#5a74e0"/></symbol>
<symbol id="wrg" viewBox="0 0 24 24"><path d="M5 22L17 6l-3-4h5l3 5-3 3-12 14z" fill="#b0c0ee" stroke="#99a" stroke-dasharray="1.5 .8"/></symbol>
<symbol id="sg1" viewBox="0 0 24 24"><path d="M12 3v18M2 22h20" stroke="#1d8a3a" stroke-width="1.3"/></symbol>
<symbol id="sg2" viewBox="0 0 24 24"><path d="M7 20V3h9v17" fill="#1c2c7a" stroke="#111"/><path d="M10 6h3v15h-3z" fill="#dde"/><path d="M1 21h22" stroke="#1d8a3a" stroke-width="1.3"/></symbol>
<symbol id="sg3" viewBox="0 0 24 24"><path d="M2 2h20v20H2z" fill="#0f6a0f"/><path d="M5 22V4h4v18M12 22V4h4v18" fill="none" stroke="#031" stroke-width="1.5"/></symbol>
<symbol id="sg4" viewBox="0 0 24 24"><path d="M2 1h20v23H2z" fill="#7c80a8"/><path d="M2 1h20v23H2z" fill="none" stroke="#446" stroke-dasharray="1 1"/></symbol>
<symbol id="sg5" viewBox="0 0 24 24"><path d="M8 1h8v22H8z" fill="#7078a0"/><path d="M6 1v22" stroke="#e8e040" stroke-width="1.4"/><path d="M16 2h6M1 22h6" stroke="#5a9" stroke-dasharray="1.5 1.2"/></symbol>
<symbol id="sg6" viewBox="0 0 24 24"><path d="M22 2h-8v20H3" fill="none" stroke="#5a9" stroke-dasharray="1.5 1.2"/></symbol>
<symbol id="sg7" viewBox="0 0 24 24"><path d="M8 2v20" stroke="#e8e040" stroke-width="1.4"/><path d="M9 2h12M1 22h6" stroke="#5a9" stroke-dasharray="1.5 1.2"/></symbol>
<symbol id="helpb" viewBox="0 0 24 24"><path d="M1 24l3-12h8v12zM12 24V12h8l3 12z" fill="#3a3a3a"/><path d="M10 16h4v4h-4z" fill="#bbb"/><text x="11" y="15" font-family="Liberation Sans" font-weight="bold" font-size="20" text-anchor="middle" fill="#e8881a">?</text></symbol>
<symbol id="stack" viewBox="0 0 24 24"><path d="M2 13l10-6 10 6-10 6z" fill="#fff" stroke="#222"/><path d="M2 16l10 6 10-6M2 19l10 5 10-5" fill="none" stroke="#222"/><path d="M12 1v9M8 7l4 5 4-5z" fill="#1c2ec0" stroke="#1c2ec0" stroke-width="1.6"/></symbol>
<symbol id="qcal" viewBox="0 0 24 24"><path d="M2 5h20v18H2z" fill="#fff" stroke="#222"/><path d="M2 19h20M6 20v3M11 20v3M16 20v3" stroke="#222"/><path d="M4 2h16" stroke="#24c" stroke-dasharray="1.5 1"/><text x="12" y="19" font-family="Liberation Sans" font-weight="bold" font-size="20" text-anchor="middle" fill="#1a7ae0">?</text></symbol>
<symbol id="cal" viewBox="0 0 24 24"><path d="M2 5h20v18H2z" fill="#fff" stroke="#222"/><path d="M2 17h20M6 18v5M10 18v5M14 18v5M18 18v5" stroke="#222"/><path d="M3 2h18" stroke="#24c" stroke-dasharray="1.5 1" stroke-width="2"/><path d="M7 7v6M5 11l2 3 2-3zM16 7v6M14 11l2 3 2-3z" fill="#1c2ec0" stroke="#1c2ec0"/></symbol>
<symbol id="cart" viewBox="0 0 24 24"><path d="M8 2h12l-2 16H5z" fill="#fff" stroke="#222"/><path d="M10 5h7M10 8h7M9 11h7M9 14h7" stroke="#446"/><path d="M5 14L1 20M4 20h18" stroke="#222" stroke-width="1.4"/><circle cx="5" cy="20" r="3.4" fill="#b01025" stroke="#222"/><circle cx="20" cy="20" r="3.4" fill="#b01025" stroke="#222"/></symbol>
<symbol id="xrep" viewBox="0 0 24 24"><path d="M2 2h16v18H2z" fill="#ddd" stroke="#333"/><path d="M5 6h11M5 9h11M5 12h11M5 15h8" stroke="#333"/><path d="M8 1l12 15M20 1L8 16" stroke="#8b1010" stroke-width="2.6"/><path d="M19 14v7M16 19l3 3 3-3z" fill="#1c2ec0" stroke="#1c2ec0"/></symbol>
<symbol id="links" viewBox="0 0 24 24"><path d="M3 3h10v11H3z" fill="#cfe8cf" stroke="#0a5a0a" stroke-width="2"/><path d="M10 10h11v11H10z" fill="#cfe8cf" stroke="#0a5a0a" stroke-width="2"/></symbol>
<symbol id="fork" viewBox="0 0 24 24"><path d="M11 3h11v18H11z" fill="#eee" stroke="#222"/><path d="M13 7h7M13 10h7M13 13h7M13 16h7" stroke="#222"/><path d="M6 1l4 5H7v7H5V6H2z" fill="#1a2ecb"/><path d="M6 23h-3v-9h3l-0 7h3z" fill="#a11818"/></symbol>
<symbol id="up" viewBox="0 0 24 24"><path d="M12 1l9 10h-5v12H8V11H3z" fill="#1d1d1d" stroke="#666" stroke-width=".6"/></symbol>
<symbol id="left" viewBox="0 0 24 24"><path d="M1 12l10-8v5h12v7H11v5z" fill="#1d1d1d" stroke="#666" stroke-width=".6"/></symbol>
<symbol id="right" viewBox="0 0 24 24"><path d="M23 12l-10-8v5H1v7h12v5z" fill="url(#dith)" stroke="#999" stroke-width=".6"/></symbol>
<symbol id="tT" viewBox="0 0 24 24"><path d="M2 3h12v19H2z" fill="#fff" stroke="#222"/><path d="M4 7h8M4 10h8M4 13h7M4 16h8M4 19h6" stroke="#222"/><path d="M18 3v20M15 3h8M15 7l3-4 3 4z" stroke="#1a2ecb" fill="#1a2ecb" stroke-width="1.6"/></symbol>
<symbol id="t1" viewBox="0 0 24 24"><path d="M2 3h12v19H2z" fill="#fff" stroke="#222"/><path d="M4 7h8M4 10h8M4 13h7M4 16h8M4 19h6" stroke="#222"/><path d="M18 2v19M15 18l3 4 3-4z" stroke="#1a2ecb" fill="#1a2ecb" stroke-width="1.6"/></symbol>
<symbol id="t2" viewBox="0 0 24 24"><path d="M2 3h12v19H2z" fill="#fff" stroke="#222"/><path d="M4 7h8M4 10h8M4 13h7M4 16h8M4 19h6" stroke="#222"/><path d="M18 8v13M15 18l3 4 3-4z" stroke="#1a2ecb" fill="#1a2ecb" stroke-width="1.6"/><path d="M18 1l3 3-3 3-3-3z" fill="#fcc" stroke="#c22"/></symbol>
<symbol id="t3" viewBox="0 0 24 24"><path d="M2 3h12v19H2z" fill="#fff" stroke="#222"/><path d="M4 7h8M4 10h8M4 13h7M4 16h8M4 19h6" stroke="#222"/><path d="M18 3v17M15 10l3 4 3-4zM15 17l3 4 3-4z" stroke="#1a2ecb" fill="#1a2ecb" stroke-width="1.4"/></symbol>
<symbol id="t4" viewBox="0 0 24 24"><path d="M2 3h12v19H2z" fill="#ddd" stroke="#222"/><path d="M4 7h8M4 10h8M4 13h7M4 16h8M4 19h6" stroke="#222"/><path d="M5 1l15 16M20 1L5 17" stroke="#7a1515" stroke-width="3"/><path d="M19 12v9M16 18l3 4 3-4z" stroke="#1a2ecb" fill="#1a2ecb" stroke-width="1.4"/></symbol>
<symbol id="redb" viewBox="0 0 24 24"><circle cx="12" cy="12" r="11" fill="#e47a7a"/><path d="M3 6h18M2 10h20M2 14h20M3 18h18" stroke="#f8d8d8" stroke-dasharray="1.5 1.5"/><path d="M8 7h8v10H8z" fill="none" stroke="#c02a2a" stroke-dasharray="1.5 1"/></symbol>
<symbol id="pb" viewBox="0 0 24 24"><path d="M3 1h18v22H3z" fill="#eee" stroke="#222"/><path d="M11 8h3v14h-3z" fill="#d22"/><path d="M15 5h3v17h-3z" fill="#e8d010"/><path d="M5 22h5v-6H5z" fill="#1a8a1a"/><text x="8" y="12" font-family="Liberation Sans" font-weight="bold" font-size="13" text-anchor="middle" fill="#111">P</text></symbol>
<symbol id="mb" viewBox="0 0 24 24"><path d="M3 1h18v22H3z" fill="#eee" stroke="#222"/><path d="M11 11h3v11h-3z" fill="#d22"/><path d="M15 5h3v17h-3z" fill="#e8d010"/><path d="M5 22h5v-6H5z" fill="#1a8a1a"/><text x="8" y="12" font-family="Liberation Sans" font-weight="bold" font-size="12" text-anchor="middle" fill="#111">M</text></symbol>
<symbol id="hand" viewBox="0 0 24 24"><path d="M6 12V5a1.5 1.5 0 013 0V3a1.5 1.5 0 013 0v1a1.5 1.5 0 013 0v3a1.5 1.5 0 013 0v9c0 4-3 7-6 7s-5-1-7-4l-4-6c-1-2 1-3 3-1z" fill="#c6d6f2" stroke="#222"/></symbol>
<symbol id="bdn" viewBox="0 0 24 24"><path d="M8 1h8v7h5l-9 9-9-9h5z" fill="#1450f0"/><circle cx="12" cy="21" r="3" fill="#1450f0"/></symbol>
<symbol id="bov" viewBox="0 0 24 24"><path d="M3 13c0-8 11-10 15-3l3-1-1 10-9-4 3-2c-2-3-6-3-7 1z" fill="#1450f0"/><circle cx="6" cy="19" r="3" fill="#1450f0"/></symbol>
<symbol id="bup" viewBox="0 0 24 24"><path d="M12 1l9 9h-5v7H8v-7H3z" fill="#1450f0"/><circle cx="12" cy="21" r="3" fill="#1450f0"/></symbol>
<symbol id="bdn2" viewBox="0 0 24 24"><path d="M8 1h8v7h5l-9 9-9-9h5z" fill="#1450f0"/><path d="M3 18h2v6H3zM7 18h2v6H7zM16 18h2v6h-2zM20 18h2v6h-2z" fill="#1450f0"/><circle cx="12.5" cy="21" r="3" fill="#1450f0"/></symbol>
<symbol id="bov2" viewBox="0 0 24 24"><path d="M3 12c0-8 11-10 15-3l3-1-1 9-9-3 3-2c-2-3-6-3-7 1z" fill="#1450f0"/><circle cx="5" cy="17" r="3" fill="#1450f0"/><path d="M3 20h2v4H3zM7 20h2v4H7zM11 20h2v4h-2zM15 20h2v4h-2zM19 20h2v4h-2z" fill="#1450f0"/></symbol>
<symbol id="bup2" viewBox="0 0 24 24"><path d="M12 1l9 9h-5v7H8v-7H3z" fill="#1450f0"/><path d="M3 18h2v6H3zM7 18h2v6H7zM16 18h2v6h-2zM20 18h2v6h-2z" fill="#1450f0"/><circle cx="12.5" cy="21" r="3" fill="#1450f0"/></symbol>
<symbol id="gp1" viewBox="0 0 24 24"><path d="M2 4h16v13H2z" fill="#5aa0e8" stroke="#357"/><path d="M6 7h10M6 11h8" stroke="#cde"/><path d="M14 1h5l-2 13h-3z" fill="#b09040"/><circle cx="16" cy="19" r="5" fill="#3ab83a"/><path d="M13 19h6M16 16v6" stroke="#fff"/></symbol>
<symbol id="gp2" viewBox="0 0 24 24"><path d="M2 4h16v13H2z" fill="#5aa0e8" stroke="#357"/><path d="M6 7h10M6 11h8" stroke="#cde"/><path d="M14 1h5l-2 13h-3z" fill="#b09040"/><circle cx="16" cy="19" r="5" fill="#e87a2a"/><path d="M13 19h6" stroke="#fff"/></symbol>
<symbol id="gp3" viewBox="0 0 24 24"><path d="M2 4h16v13H2z" fill="#a0c8f0" stroke="#57a"/><path d="M16 1l6 3-8 16-7 3 1-8z" fill="#e0b050" stroke="#a07820"/></symbol>
<symbol id="gp4" viewBox="0 0 24 24"><path d="M2 2h16v13H2z" fill="#5aa0e8" stroke="#357"/><path d="M8 11h14v12H8z" fill="#1a6ad0"/><path d="M11 12h8v4h-8z" fill="#fff"/><path d="M11 19h8v4h-8z" fill="#bcd"/></symbol>
<symbol id="gp5" viewBox="0 0 24 24"><path d="M2 4h16v13H2z" fill="#5aa0e8" stroke="#357"/><path d="M6 7h10M6 11h8" stroke="#cde"/><path d="M14 1h5l-2 10h-3z" fill="#b09040"/><path d="M11 18h6v-5l7 7-7 4v-3h-6z" fill="#3ab83a"/></symbol>
<symbol id="curs" viewBox="0 0 24 24"><path d="M7 2v18l4-4 3 7 3-1-3-7h6z" fill="#000"/></symbol>
<symbol id="ov" viewBox="0 0 24 24"><path d="M3 3h14v14H3" fill="none" stroke="#222" stroke-width="1.4"/><path d="M8 8h12v12H8z" fill="none" stroke="#000" stroke-width="3"/><path d="M18 17l4 5-5 1" fill="#000"/></symbol>
<symbol id="mv" viewBox="0 0 24 24"><path d="M12 1l4 5h-3v5h5V8l5 4-5 4v-3h-5v5h3l-4 5-4-5h3v-5H6v3l-5-4 5-4v3h5V6H8z" fill="#bbb" stroke="#333" stroke-dasharray="1.5 1"/></symbol>
<symbol id="cur2" viewBox="0 0 24 24"><path d="M7 2v15M17 2v15" stroke="#222" stroke-width="1.5"/><path d="M3 17h8v5H3zM13 17h8v5h-8z" fill="#999" stroke="#222"/></symbol>
<symbol id="brk" viewBox="0 0 24 24"><path d="M13 2h9v20h-9" fill="none" stroke="#222" stroke-width="1.5"/><path d="M15 7v11M18 7v11M20 7v11" stroke="#222" stroke-dasharray="1.5 1.5"/><path d="M2 8h8M6 4v8M2 17h8M7 14l4 3-4 3z" stroke="#222" fill="#222"/></symbol>
<symbol id="traffic" viewBox="0 0 24 24"><path d="M4 1h10v23H4z" fill="#111"/><circle cx="9" cy="5" r="3" fill="#e82020"/><circle cx="9" cy="12" r="3" fill="#e8d010"/><circle cx="9" cy="19" r="3" fill="#18a818"/><path d="M16 5l6 7-6 7z" fill="#fff" stroke="#222"/></symbol>
<symbol id="zi" viewBox="0 0 24 24"><circle cx="10" cy="10" r="8" fill="#f6f6f6" stroke="#111" stroke-width="2"/><path d="M6 10h8M10 6v8" stroke="#111" stroke-width="2"/><path d="M15 15l7 7" stroke="#1c2ec0" stroke-width="3.4"/></symbol>
<symbol id="zo" viewBox="0 0 24 24"><circle cx="10" cy="10" r="8" fill="#f6f6f6" stroke="#111" stroke-width="2"/><path d="M6 10h8" stroke="#111" stroke-width="2"/><path d="M15 15l7 7" stroke="#1c2ec0" stroke-width="3.4"/></symbol>
<symbol id="zf" viewBox="0 0 24 24"><circle cx="10" cy="10" r="8" fill="#1a4a8a" stroke="#111" stroke-width="2"/><path d="M15 15l7 7" stroke="#1c2ec0" stroke-width="3.4"/></symbol>
<symbol id="zy1" viewBox="0 0 24 24"><path d="M6 2v14M1 16h12v6H1z" fill="#f8e8a0" stroke="#c79200" stroke-width="2"/><circle cx="14" cy="7" r="4.5" fill="#aaa" stroke="#555"/><path d="M17 10l5 5" stroke="#1c2ec0" stroke-width="3"/></symbol>
<symbol id="zy2" viewBox="0 0 24 24"><path d="M5 5v11M17 5v11M1 16h9v6H1zM13 16h9v6h-9z" fill="#f8e8a0" stroke="#c79200" stroke-width="2"/><circle cx="13" cy="6" r="4.5" fill="#aaa" stroke="#555"/><path d="M16 9l4 5" stroke="#1c2ec0" stroke-width="3"/></symbol>
<symbol id="zs" viewBox="0 0 24 24"><path d="M2 2h16v17H2z" fill="none" stroke="#335" stroke-dasharray="1.5 1.5" stroke-width="1.4"/><circle cx="13" cy="13" r="5" fill="#bbb" stroke="#444"/><path d="M16 16l6 6" stroke="#1c2ec0" stroke-width="3"/></symbol>
<symbol id="dia" viewBox="0 0 18 18"><path d="M9 0l9 9-9 9-9-9z" fill="#0d7cc2"/><path d="M9 0l9 9H0z" fill="#3cc6f4"/><path d="M9 5l4 4-4 4-4-4z" fill="#22b6ee"/><path d="M0 9l9 9V13L5 9z" fill="#0e6ea8"/></symbol>
<symbol id="mod" viewBox="0 0 16 16"><path d="M0 16L16 0v16z" fill="#12325e"/><path d="M2 14V3h11v11z" fill="#19aee0"/><path d="M2 3h11L2 14z" fill="#aef0ff"/></symbol>
<symbol id="obj" viewBox="0 0 22 22"><path d="M8 1l5 4-5 5-5-5z" fill="#9b30c8"/><path d="M12 6h9v10h-9z" fill="#18a838"/><circle cx="13" cy="9" r="4.5" fill="#1fd0e8"/><path d="M7 9l8 7-8 6-7-6z" fill="#1a5ae8"/></symbol>
</defs>

<!-- window controls -->
<path d="M1776 16.5h12M1834 11.5h10.5v10.5h-10.5zM1893 11l11 12M1904 11l-11 12" stroke="#222" stroke-width="1" fill="none"/>

<!-- row 1 -->
<use href="#doc" x="25" y="70" width="24" height="24"/><path d="M52 81h8l-4 5z" fill="#222"/>
<use href="#folder" x="65" y="70" width="24" height="24"/>
<use href="#save" x="92" y="70" width="24" height="24"/>
<use href="#reload" x="120" y="70" width="24" height="24"/>
<use href="#print" x="147" y="70" width="24" height="24"/>
<path d="M180 68v28" stroke="#666" stroke-dasharray="2 2"/>
<use href="#cut" x="188" y="70" width="24" height="24"/>
<use href="#copy" x="217" y="70" width="24" height="24"/>
<use href="#paste" x="244" y="70" width="24" height="24"/>
<use href="#undo" x="272" y="70" width="24" height="24"/>
<use href="#redo" x="298" y="70" width="24" height="24"/>
<path d="M331 68v28" stroke="#666" stroke-dasharray="2 2"/>
<use href="#green" x="338" y="70" width="24" height="24"/><path d="M366 81h6l-3 4z" fill="#777"/>
<use href="#bino" x="378" y="70" width="24" height="24"/>
<use href="#tree" x="405" y="70" width="24" height="24"/>
<use href="#xl" x="455" y="70" width="24" height="24"/>
<use href="#xr" x="482" y="70" width="24" height="24"/>
<use href="#xdoc" x="513" y="70" width="24" height="24"/>
<use href="#xblue" x="545" y="70" width="24" height="24"/>
<use href="#yp" x="593" y="70" width="24" height="24"/>
<use href="#yl" x="619" y="70" width="24" height="24"/>
<use href="#gl" x="652" y="70" width="24" height="24"/>
<use href="#gr" x="676" y="70" width="24" height="24"/>
<use href="#d1" x="704" y="70" width="24" height="24"/>
<use href="#d2" x="731" y="70" width="24" height="24"/>
<use href="#d3" x="759" y="70" width="24" height="24"/>
<use href="#d4" x="786" y="70" width="24" height="24"/>
<use href="#mg1" x="835" y="70" width="24" height="24"/><path d="M863 81h6l-3 4z" fill="#666"/>
<use href="#mg2" x="874" y="70" width="24" height="24"/><path d="M902 81h6l-3 4z" fill="#666"/>
<use href="#mg3" x="913" y="70" width="24" height="24"/>
<path d="M946 68v28" stroke="#666" stroke-dasharray="2 2"/>
<path d="M1166 76h13l-6.5 8z" fill="#666"/>
<use href="#bgray" x="1187" y="70" width="24" height="24"/>
<use href="#bgray" x="1208" y="70" width="24" height="24"/>
<use href="#wrg" x="1236" y="70" width="24" height="24"/>
<use href="#sg1" x="1290" y="70" width="24" height="24"/>
<use href="#sg2" x="1322" y="70" width="24" height="24"/>
<use href="#sg3" x="1354" y="70" width="24" height="24"/>
<path d="M1390 68v28" stroke="#666" stroke-dasharray="2 2"/>
<use href="#sg4" x="1400" y="70" width="24" height="24"/>
<use href="#sg5" x="1425" y="70" width="24" height="24"/>
<use href="#sg6" x="1455" y="70" width="24" height="24"/>
<use href="#sg7" x="1482" y="70" width="24" height="24"/>
<use href="#helpb" x="1669" y="70" width="24" height="24"/>
<use href="#stack" x="1719" y="70" width="24" height="24"/>
<use href="#qcal" x="1746" y="70" width="24" height="24"/>
<use href="#cal" x="1773" y="70" width="24" height="24"/>
<use href="#cart" x="1801" y="70" width="24" height="24"/>
<use href="#xrep" x="1828" y="70" width="24" height="24"/>

<!-- row 2 -->
<use href="#links" x="29" y="110" width="24" height="24"/>
<use href="#fork" x="61" y="110" width="24" height="24"/><path d="M86 121h7l-3.5 5z" fill="#222"/>
<use href="#up" x="97" y="110" width="24" height="24"/>
<use href="#left" x="125" y="110" width="24" height="24"/>
<use href="#right" x="152" y="110" width="24" height="24"/>
<path d="M185 108v28" stroke="#666" stroke-dasharray="2 2"/>
<use href="#tT" x="194" y="110" width="24" height="24"/>
<path d="M304 118h9l-4.5-6zM304 125h9l-4.5 6z" fill="#111"/>
<use href="#t1" x="325" y="110" width="24" height="24"/>
<use href="#t2" x="352" y="110" width="24" height="24"/>
<use href="#t3" x="380" y="110" width="24" height="24"/>
<use href="#t4" x="408" y="110" width="24" height="24"/>
<use href="#redb" x="433" y="110" width="24" height="24"/>
<path d="M467 108v28" stroke="#666" stroke-dasharray="2 2"/>
<use href="#pb" x="478" y="110" width="24" height="24"/>
<use href="#mb" x="510" y="110" width="24" height="24"/>
<use href="#hand" x="540" y="110" width="24" height="24"/>
<use href="#bdn" x="1369" y="110" width="24" height="24"/>
<use href="#bov" x="1395" y="110" width="24" height="24"/>
<use href="#bup" x="1424" y="110" width="24" height="24"/>
<path d="M1456 108v28" stroke="#666" stroke-dasharray="2 2"/>
<use href="#bdn2" x="1465" y="110" width="24" height="24"/>
<use href="#bov2" x="1492" y="110" width="24" height="24"/>
<use href="#bup2" x="1520" y="110" width="24" height="24"/>
<path d="M1781 115h15l-7.5 9z" fill="#111"/>

<!-- row 3 -->
<path d="M396 156h13l-6.5 8z" fill="#666"/>
<use href="#gp1" x="445" y="150" width="24" height="24"/><path d="M470 160h7l-3.5 5z" fill="#222"/>
<use href="#gp2" x="484" y="150" width="24" height="24"/><path d="M509 160h7l-3.5 5z" fill="#222"/>
<use href="#gp3" x="521" y="150" width="24" height="24"/>
<use href="#gp4" x="549" y="150" width="24" height="24"/><path d="M575 160h7l-3.5 5z" fill="#222"/>
<use href="#gp5" x="587" y="150" width="24" height="24"/>
<path d="M651 155v14" stroke="#555" stroke-width="2" stroke-dasharray="2 1.5"/>
<circle cx="685" cy="162" r="6" fill="none" stroke="#888" stroke-width="1.5" stroke-dasharray="2 1"/>
<text x="716" y="167" font-family="Liberation Sans" font-size="12" text-anchor="middle" fill="#666">I/O</text>
<path d="M742 156h14v13h-14z" fill="none" stroke="#444" stroke-dasharray="1.5 1.5"/>
<text x="749" y="167" font-family="Liberation Sans" font-size="11" text-anchor="middle" fill="#666">I</text>
<text x="782" y="167" font-family="Liberation Sans" font-size="10.5" font-weight="bold" text-anchor="middle" fill="#666">ALL</text>
<use href="#wrg" x="799" y="150" width="24" height="24"/>
<use href="#curs" x="852" y="150" width="24" height="24"/>
<use href="#ov" x="885" y="150" width="24" height="24"/>
<use href="#mv" x="917" y="150" width="24" height="24"/>
<use href="#cur2" x="950" y="150" width="24" height="24"/>
<use href="#brk" x="982" y="150" width="24" height="24"/>
<path d="M1017 148v28" stroke="#666" stroke-dasharray="2 2"/>
<use href="#traffic" x="1030" y="150" width="24" height="24"/>
<use href="#zi" x="1076" y="150" width="24" height="24"/>
<use href="#zo" x="1103" y="150" width="24" height="24"/>
<use href="#zf" x="1131" y="150" width="24" height="24"/>
<use href="#zy1" x="1159" y="150" width="24" height="24"/>
<use href="#zy2" x="1186" y="150" width="24" height="24"/>
<use href="#zs" x="1214" y="150" width="24" height="24"/>

<!-- panel title icons -->
<use href="#cart" x="12" y="186" width="21" height="21"/>
<use href="#obj" x="399" y="186" width="21" height="21"/>
<g transform="translate(410 547)"><circle r="9" fill="#5a7aa8"/><circle r="9" fill="none" stroke="#3e5a85" stroke-width="3" stroke-dasharray="3 2"/><circle r="3.5" fill="#e8eef8"/></g>
<g><rect x="789" y="187" width="20" height="20" fill="#ccc" stroke="#111"/><rect x="791" y="193" width="16" height="13" fill="#000"/><path d="M792 201h4v-4h5v6h5" fill="none" stroke="#0c0"/></g>

<!-- panel header dropdown arrows -->
<path d="M14 217h9l-4.5 8z" fill="#666"/><path d="M401 217h9l-4.5 8z" fill="#666"/><path d="M401 567h9l-4.5 8z" fill="#666"/>
<path d="M771 215v10l-5-5z" fill="#111"/>

<!-- title buttons -->
<g fill="#f0f0f0" stroke="#999">
<rect x="333" y="190" width="12" height="13"/><rect x="351" y="190" width="12" height="13"/><rect x="369" y="190" width="13" height="13"/>
<rect x="722" y="190" width="12" height="13"/><rect x="739" y="190" width="12" height="13"/><rect x="757" y="190" width="13" height="13"/>
<rect x="722" y="540" width="12" height="13"/><rect x="739" y="540" width="12" height="13"/><rect x="757" y="540" width="13" height="13"/>
<rect x="1873" y="190" width="12" height="13"/><rect x="1891" y="190" width="12" height="13"/><rect x="1908" y="190" width="12" height="13"/>
</g>
<path d="M339 191v11M334 196.500h10M728 191v11M723 196.500h10M728 541v11M723 546.500h10M1879 191v11M1874 196.500h10" stroke="#000" stroke-width="2.2"/>
<path d="M372 193l7 7M379 193l-7 7M760 193l7 7M767 193l-7 7M760 543l7 7M767 543l-7 7M1911 193l7 7M1918 193l-7 7" stroke="#000" stroke-width="1.8"/>
<path d="M353 195h6v6h-6zM356 197l5-5M358 192h3v3M741 195h6v6h-6zM744 197l5-5M746 192h3v3M741 545h6v6h-6zM744 547l5-5M746 542h3v3M1893 195h6v6h-6zM1896 197l5-5M1898 192h3v3" stroke="#000" fill="none" stroke-width="1.2"/>

<!-- sim tree -->
<path d="M31 245h8M53 264h9M47 270v14h13" stroke="#999" fill="none"/>
<rect x="19" y="239" width="12" height="12" rx="2" fill="#eee" stroke="#999"/><path d="M21 245h8" stroke="#111" stroke-width="1.4"/>
<rect x="41" y="258" width="12" height="12" rx="2" fill="#f6f6f6" stroke="#999"/><path d="M43 264h8M47 260v8" stroke="#111" stroke-width="1.4"/>
<use href="#mod" x="39" y="237" width="16" height="16"/>
<use href="#mod" x="62" y="256" width="16" height="16"/>
<circle cx="68" cy="284" r="8" fill="url(#ball)"/>
<path d="M38 295v18h19" stroke="#1a3ad0" stroke-width="1.6" fill="none"/><path d="M41 307l6-8 5 3 5-5M41 302l5 5 5-5 5 7" stroke="#d82020" fill="none" stroke-width="1.6"/><path d="M41 312c4-6 10-6 15 0z" fill="#28b048"/>

<!-- objects diamonds -->
<use href="#dia" x="424" y="234" width="18" height="18"/>
<use href="#dia" x="424" y="254" width="18" height="18"/>
<use href="#dia" x="424" y="275" width="18" height="18"/>
<use href="#dia" x="424" y="295" width="18" height="18"/>
<use href="#dia" x="424" y="315" width="18" height="18"/>
<use href="#dia" x="424" y="335" width="18" height="18"/>
<circle cx="433" cy="594" r="8" fill="url(#ball)"/>

<!-- wave left icons -->
<use href="#obj" x="799" y="212" width="20" height="20"/><path d="M825 222h7l-3.500 4z" fill="#111"/>
<use href="#dia" x="825" y="241" width="18" height="18"/>
<use href="#dia" x="825" y="262" width="18" height="18"/>
<use href="#dia" x="825" y="283" width="18" height="18"/>
<use href="#dia" x="825" y="305" width="18" height="18"/>
<use href="#dia" x="825" y="326" width="18" height="18"/>
<use href="#dia" x="825" y="347" width="18" height="18"/>
<path d="M802 367.500h180M993 367.500h118" stroke="#222" stroke-width="1.5"/>
<path d="M802 363.500l5 4-5 4z" fill="none" stroke="#222"/>

<!-- grid -->
<path d="M1214.600 237V763M1306.400 237V763M1398.700 237V763M1489.800 237V763M1582.400 237V763M1674 237V763M1766.600 237V763M1857.700 237V763" stroke="#666" stroke-width="1.200"/>
<!-- waves -->
<path d="M1124 250.300H1857.700" stroke="#0000ff" stroke-width="1.700" fill="none"/>
<g stroke="#00d000" stroke-width="1.600" fill="none">
<path d="M1123 273V279H1398.700V264H1489.800V279H1582.400V264H1857.700" stroke="#00c000"/>
<path d="M1123 294V300H1489.800V285H1857.700" stroke="#00e000"/>
<path d="M1123 315.700V321.700H1306.400V306.700H1489.800V321.700H1674V306.700H1857.700" stroke="#00e000"/>
<path d="M1123 336.700V342.700H1214.600V327.700H1306.400V342.700H1398.700V327.700H1489.800V342.700H1582.400V327.700H1674V342.700H1766.600V327.700H1857.700"/>
<path d="M1123 358V364H1214.600V349H1398.700V364H1489.800V349H1582.400V364H1766.600V349H1857.700" stroke="#00c000"/>
</g>
<!-- cursor -->
<path d="M1371 212V233M1371 238V793" stroke="#f8c800" stroke-width="3.500"/>
<!-- ruler -->
<rect x="1120" y="769" width="775" height="6" fill="url(#tk1)"/>
<rect x="1120" y="767" width="775" height="8" fill="url(#tk5)"/>
<path d="M1119 793.500H1352M1390 793.500H1894" stroke="#666"/>
<path d="M1371 767V793" stroke="#f8c800" stroke-width="3.500"/>
<path d="M1377.500 822V837" stroke="#f5c400" stroke-width="1"/>

<!-- bottom icons in wave -->
<path d="M802 777h12l-3-3h-3l-3 3zM815 773h13v10h-13z" fill="#c0d0ee"/><circle cx="837" cy="780" r="5.500" fill="#8fd08f" stroke="#ccc"/>
<path d="M805 802h11v10h-11z" fill="#e0b040"/><path d="M807 802v-3a3.500 3.500 0 017 0v3" fill="none" stroke="#ccc" stroke-width="1.500"/>
<path d="M821 811l8-8 3-4 3 1-3 3 2 1-4 3-6 7z" fill="#9bbce8"/><circle cx="842" cy="803" r="6" fill="#e87070"/><path d="M839 803h6" stroke="#fff" stroke-width="1.500"/>

<!-- scroll arrows -->
<path d="M24 828v10l-5-5zM372 828v10l5-5z" fill="#111"/>
<path d="M410 858v9l-4.500-4.500zM762 858v9l4.500-4.500z" fill="#111"/>
<path d="M812 824v9l-5-4.500zM974 824v9l5-4.500zM1003 824v9l-5-4.500zM1102 824v9l5-4.500z" fill="#999"/>
<path d="M1132 824v10l-5-5zM1883 824v10l5-5z" fill="#111"/>
<path d="M1906 250h10l-5-5zM1906 746h10l-5 5zM1906 915h10l-5-5zM1906 990h10l-5 5z" fill="#111"/>
<path d="M1907 856l-3 4.500 3 4.500M1911 856l-3 4.500 3 4.500" fill="none" stroke="#666" stroke-width="1.400"/>
<path d="M370 855l-3 5.500 3 5.500M380 855l3 5.500-3 5.500" fill="none" stroke="#666" stroke-width="1.500"/>

<!-- tab icons -->
<g><path d="M17 872V855l3 3 2-6 3 8 3-4 3 8v8z" fill="none" stroke="#111" stroke-width="1.500"/><path d="M20 872v-14h3v14zM25 872v-10h3v10z" fill="#7a5a1a"/><path d="M15 872h19" stroke="#111" stroke-width="2"/></g>
<use href="#cal" x="111" y="850" width="20" height="20"/>
<use href="#cart" x="209" y="850" width="21" height="21"/>
<g><rect x="793" y="851" width="18" height="18" fill="#ccc" stroke="#111"/><rect x="795" y="856" width="14" height="12" fill="#000"/><path d="M796 863h4v-4h4v6h4" fill="none" stroke="#0c0"/></g>
<g><circle cx="891" cy="860" r="9" fill="#2a6ac8"/><path d="M882 860h18M891 851v18M884 854c4 3 10 3 14 0M884 866c4-3 10-3 14 0" stroke="#bcd8f4" fill="none"/><rect x="893" y="851" width="8" height="7" fill="#e4eef8"/></g>
<path d="M90 856l7 7M97 856l-7 7M188 856l7 7M195 856l-7 7M262 856l7 7M269 856l-7 7M860 856l7 7M867 856l-7 7M952 856l7 7M959 856l-7 7" stroke="#aaa" stroke-width="2.400"/>
<!-- transcript icon -->
<path d="M14 906v-14c0-7 16-7 16 0v14h-4v-13c0-3-8-3-8 0v13z" fill="#666"/><path d="M18 906v-8h8v8z" fill="#ccc"/>

<!-- taskbar -->
<path d="M18 1029l9-1.300v8.800h-9zM28.500 1027.500l10-1.500v10.500h-10zM18 1037.500h9v8.800l-9-1.300zM28.500 1037.500h10v10.500l-10-1.500z" fill="#fff"/>
<circle cx="85" cy="1035" r="6.500" fill="none" stroke="#ddd" stroke-width="1.300"/><path d="M80 1040l-7 8" stroke="#ddd" stroke-width="1.500"/>
<circle cx="518" cy="1037" r="8" fill="none" stroke="#fff" stroke-width="2.500"/>
<path d="M569 1027h12M569 1047h12M569 1032h12v10h-12zM586 1027v4M586 1035v12" fill="none" stroke="#eee" stroke-width="1.400"/>
<circle cx="662" cy="1036" r="15" fill="#7a9ab8"/><circle cx="662" cy="1036" r="15" fill="none" stroke="#b0c8d8" stroke-width="1"/><path d="M662 1026c-5 6-4 12 0 16 4-4 5-10 0-16zM652 1031c0 6 4 11 10 11-3-5-5-9-10-11zM672 1031c0 6-4 11-10 11 3-5 5-9 10-11z" fill="#cfe0f0"/><circle cx="662" cy="1037" r="2" fill="#e8d060"/>
<circle cx="723" cy="1036" r="15" fill="#0d70c8"/><path d="M710 1036c0-10 8-15 14-15 8 0 14 6 14 12 0 4-3 6-7 6-5 0-8-2-8-2 1-4 5-4 5-9-4-4-13-3-18 8z" fill="#35c8a8"/><path d="M712 1044c2 5 8 8 13 7 6-1 11-5 12-9-4 3-12 4-16 0-3-3-4-8-2-12-4 3-9 8-7 14z" fill="#1c5ab8"/>
<path d="M1610.500 1042l6.500-7 6.500 7" fill="none" stroke="#fff" stroke-width="1.400" transform="translate(-6 -1)"/>
<path d="M1635 1044c0-8 6-14 14-15M1639 1044c0-5 4-10 10-11M1643 1044c0-3 2-6 6-7" fill="none" stroke="#ddd" stroke-width="1.200"/>
<path d="M1662 1033h4l5-4v15l-5-4h-4zM1675 1032c2 3 2 7 0 10M1678 1029c4 5 4 11 0 16" fill="none" stroke="#ddd" stroke-width="1.200"/>
</svg>
</body></html>
